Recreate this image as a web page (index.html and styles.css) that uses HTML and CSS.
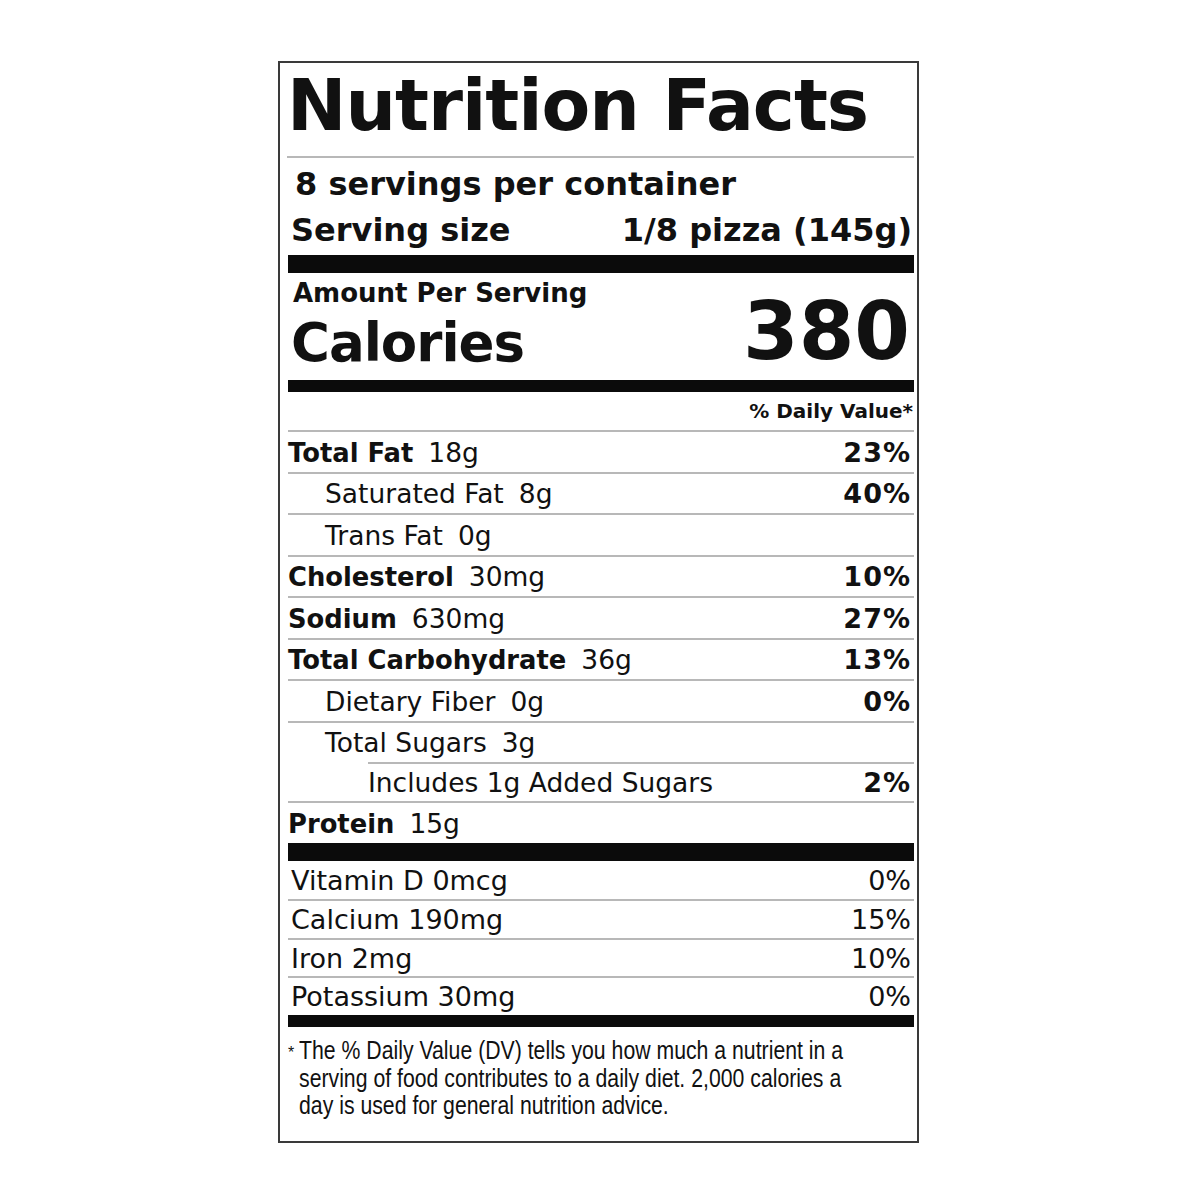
FILE: index.html
```html
<!DOCTYPE html>
<html lang="en">
<head>
<meta charset="utf-8">
<title>Nutrition Facts</title>
<link rel="stylesheet" href="styles.css">
</head>
<body>
<div class="label">
  <div class="title">Nutrition Facts</div>
  <div class="servings">
    <div class="per">8 servings per container</div>
    <div class="size"><span>Serving size</span><span>1/8 pizza (145g)</span></div>
  </div>
  <div class="bar bar-lg"></div>
  <div class="cal">
    <div class="cal-left">
      <div class="amount">Amount Per Serving</div>
      <div class="cal-name">Calories</div>
    </div>
    <div class="cal-num">380</div>
  </div>
  <div class="bar bar-md"></div>
  <div class="dv">% Daily Value*</div>
  <div class="rows">
    <div class="row"><span class="name"><b>Total Fat</b><span class="amt">18g</span></span><b class="pct">23%</b></div>
    <div class="row sub"><span class="name">Saturated Fat<span class="amt">8g</span></span><b class="pct">40%</b></div>
    <div class="row sub"><span class="name">Trans Fat<span class="amt">0g</span></span></div>
    <div class="row"><span class="name"><b>Cholesterol</b><span class="amt">30mg</span></span><b class="pct">10%</b></div>
    <div class="row"><span class="name"><b>Sodium</b><span class="amt">630mg</span></span><b class="pct">27%</b></div>
    <div class="row"><span class="name"><b>Total Carbohydrate</b><span class="amt">36g</span></span><b class="pct">13%</b></div>
    <div class="row sub"><span class="name">Dietary Fiber<span class="amt">0g</span></span><b class="pct">0%</b></div>
    <div class="row sub"><span class="name">Total Sugars<span class="amt">3g</span></span></div>
    <div class="row added"><span class="name">Includes 1g Added Sugars</span><b class="pct">2%</b></div>
    <div class="row"><span class="name"><b>Protein</b><span class="amt">15g</span></span></div>
  </div>
  <div class="bar bar-lg"></div>
  <div class="vits">
    <div class="vit"><span>Vitamin D 0mcg</span><span>0%</span></div>
    <div class="vit"><span>Calcium 190mg</span><span>15%</span></div>
    <div class="vit"><span>Iron 2mg</span><span>10%</span></div>
    <div class="vit"><span>Potassium 30mg</span><span>0%</span></div>
  </div>
  <div class="bar bar-md"></div>
  <div class="foot">
    <span class="star">*</span>
    <p class="foot-text">The % Daily Value (DV) tells you how much a nutrient in a<br>serving of food contributes to a daily diet. 2,000 calories a<br>day is used for general nutrition advice.</p>
  </div>
</div>
</body>
</html>
```

FILE: styles.css
```css
html, body {
  margin: 0;
  padding: 0;
  background: #ffffff;
}

body {
  padding: 61px 0 0 278px;
  font-family: "DejaVu Sans", "Liberation Sans", sans-serif;
  color: #111111;
}

.label {
  width: 641px;
  box-sizing: border-box;
  border: 2px solid #3a3a3a;
  padding: 0 3px 0 8px;
}

.title {
  font-size: 71px;
  font-weight: bold;
  line-height: 80px;
  letter-spacing: -1px;
  padding: 3.4px 0 9.6px;
  margin-left: -1px;
  border-bottom: 2px solid #b8b8b8;
}

.servings {
  padding: 3px 0 1px;
  font-size: 32px;
  font-weight: bold;
  line-height: 46.5px;
}

.per {
  padding-left: 7px;
}

.size {
  display: flex;
  justify-content: space-between;
  padding-left: 3px;
  padding-right: 2px;
}

.bar {
  background: #0b0b0b;
}

.bar-lg {
  height: 18px;
}

.bar-md {
  height: 12px;
}

.cal {
  height: 107px;
  box-sizing: border-box;
  padding: 4.5px 4px 6.5px 5px;
  display: flex;
  justify-content: space-between;
  align-items: flex-end;
  font-weight: bold;
}

.amount {
  font-size: 26px;
  line-height: 30px;
}

.cal-name {
  font-size: 53px;
  line-height: 60px;
  letter-spacing: -1px;
  margin-top: 5.6px;
  margin-left: -2px;
}

.cal-num {
  font-size: 80px;
  line-height: 80px;
  margin-bottom: 1.5px;
}

.dv {
  height: 38.5px;
  box-sizing: border-box;
  padding: 7px 1px 0 0;
  text-align: right;
  font-size: 20px;
  line-height: 24px;
  font-weight: bold;
}

.row {
  height: 41.5px;
  box-sizing: border-box;
  border-top: 2px solid #b8b8b8;
  display: flex;
  align-items: center;
  justify-content: space-between;
  padding-right: 3px;
  font-size: 26.5px;
}

.row b {
  font-size: 25.8px;
  font-weight: bold;
}

.row .pct {
  font-size: 27px;
  letter-spacing: 1px;
}

.row.sub {
  padding-left: 37px;
}

.row.added {
  height: 39px;
  margin-left: 80px;
}

.amt {
  margin-left: 15px;
}

.vit {
  height: 38.5px;
  box-sizing: border-box;
  border-top: 2px solid #b8b8b8;
  display: flex;
  align-items: center;
  justify-content: space-between;
  padding: 0 3px 0 3px;
  font-size: 27px;
}

.vit:first-child {
  border-top: none;
}

.foot {
  display: flex;
  align-items: flex-start;
  padding: 10.5px 0 21px 0;
  font-family: "Liberation Sans", sans-serif;
  font-size: 25px;
  line-height: 27.5px;
}

.star {
  width: 11px;
  flex: none;
  font-size: 16px;
  line-height: 27.5px;
  margin-top: 2px;
}

.foot-text {
  margin: 0;
  white-space: nowrap;
  transform: scaleX(0.85);
  transform-origin: left center;
}
```
